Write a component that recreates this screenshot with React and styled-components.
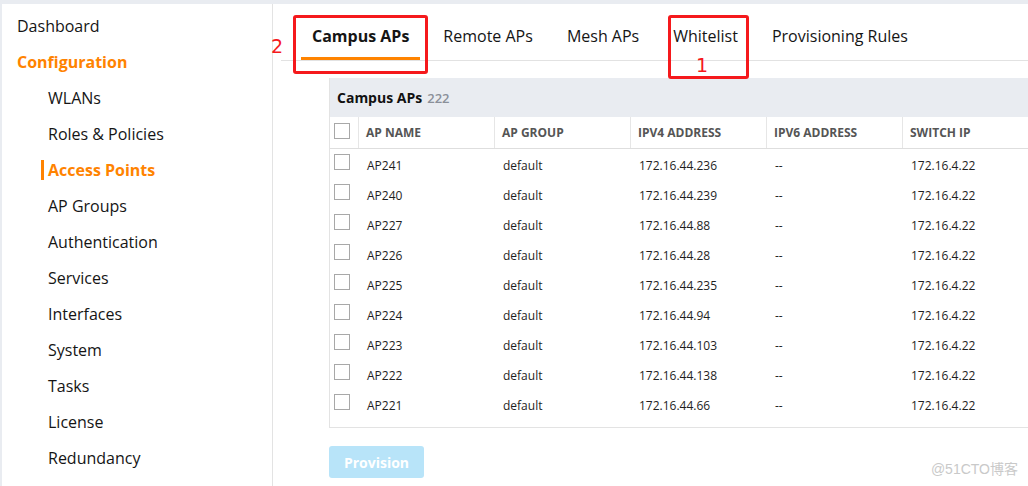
import styled, { createGlobalStyle } from "styled-components";

const GlobalStyle = createGlobalStyle`
  html, body {
    margin: 0;
    padding: 0;
    background: #fff;
    overflow: hidden;
  }
  body {
    font-family: "Open Sans", "Noto Sans", sans-serif;
    color: #1b1b1b;
  }
`;

const orange = "#ff8300";

const Page = styled.div`
  position: relative;
  width: 1028px;
  height: 486px;
  border-top: 4px solid #e9ecf1;
  box-sizing: border-box;
  display: flex;
  overflow: hidden;
`;

const Sidebar = styled.nav`
  width: 273px;
  flex: none;
  box-sizing: border-box;
  border-left: 2px solid #e9ecf1;
  border-right: 1px solid #e3e3e3;
  padding: 4px 0 0 15px;
`;

const NavItem = styled.div`
  position: relative;
  height: 36px;
  line-height: 36px;
  font-size: 16px;
  padding-left: ${(p) => (p.$sub ? "31px" : "0")};
  color: ${(p) => (p.$active ? orange : "#151515")};
  font-weight: ${(p) => (p.$active ? 700 : 400)};
  white-space: nowrap;

  ${(p) =>
    p.$marker &&
    `
    &::before {
      content: "";
      position: absolute;
      left: 24px;
      top: 8px;
      width: 3px;
      height: 20px;
      background: ${orange};
    }
  `}
`;

const Main = styled.main`
  flex: 1;
  padding-left: 8px;
  min-width: 0;
`;

const TabBar = styled.div`
  display: flex;
  gap: 12px;
  height: 56px;
  padding-left: 20px;
  border-bottom: 1px solid #e2e2e2;
`;

const Tab = styled.div`
  display: flex;
  align-items: center;
  padding: 11px 11px 0;
  font-size: 16px;
  font-weight: ${(p) => (p.$active ? 700 : 400)};
  color: #151515;
  border-bottom: 3px solid ${(p) => (p.$active ? orange : "transparent")};
  white-space: nowrap;
`;

const Content = styled.section`
  padding: 17px 0 0 48px;
`;

const Panel = styled.div`
  width: 720px;
  border-left: 1px solid #e3e3e3;
  border-bottom: 1px solid #e3e3e3;
  padding-bottom: 7px;
`;

const PanelHead = styled.div`
  height: 39px;
  display: flex;
  align-items: center;
  gap: 5px;
  padding-left: 7px;
  background: #e9ecf1;
  font-size: 14px;
  font-weight: 700;
  color: #111;
`;

const Count = styled.span`
  font-size: 13px;
  font-weight: 600;
  color: #8b9099;
`;

const Row = styled.div`
  display: grid;
  grid-template-columns: 28px repeat(5, 136px);
  height: ${(p) => (p.$head ? "31px" : "30px")};
  align-items: center;
  ${(p) => p.$head && "border-bottom: 1px solid #dedede; margin-bottom: 1px;"}
`;

const HeadCell = styled.div`
  height: 100%;
  display: flex;
  align-items: center;
  padding-left: ${(p) => (p.$first ? "0" : "7px")};
  font-size: 12px;
  font-weight: 700;
  color: #555;
  border-left: ${(p) => (p.$first ? "none" : "1px solid #e6e6e6")};
  box-sizing: border-box;
`;

const Cell = styled.div`
  padding-left: 9px;
  font-size: 12px;
  color: #1e1e1e;
  white-space: nowrap;
`;

const Check = styled.span`
  display: block;
  width: 14px;
  height: 14px;
  margin: ${(p) => (p.$head ? "-4px 0 0 4px" : "-6px 0 0 4px")};
  border: 1px solid #a8a8a8;
  background: #fff;
`;

const ProvisionButton = styled.button`
  margin-top: 18px;
  width: 95px;
  height: 32px;
  border: none;
  border-radius: 3px;
  background: #b8e4f9;
  color: #fff;
  font-family: "Open Sans", sans-serif;
  font-size: 14px;
  font-weight: 700;
`;

const Annotation = styled.div`
  position: absolute;
  left: ${(p) => p.$x}px;
  top: ${(p) => p.$y}px;
  width: ${(p) => p.$w}px;
  height: ${(p) => p.$h}px;
  border: 3px solid #f5191c;
  border-radius: 3px;
  box-sizing: border-box;
`;

const Mark = styled.span`
  position: absolute;
  left: ${(p) => p.$x}px;
  top: ${(p) => p.$y}px;
  font-family: "DejaVu Sans", sans-serif;
  font-size: 19px;
  line-height: 1;
  color: #f5191c;
`;

const Watermark = styled.span`
  position: absolute;
  right: 10px;
  bottom: 8px;
  font-family: "Liberation Sans", "Noto Sans CJK SC", sans-serif;
  font-size: 14px;
  color: #c9c9c9;
`;

const subItems = [
  "WLANs",
  "Roles & Policies",
  "Access Points",
  "AP Groups",
  "Authentication",
  "Services",
  "Interfaces",
  "System",
  "Tasks",
  "License",
  "Redundancy",
];

const tabs = ["Campus APs", "Remote APs", "Mesh APs", "Whitelist", "Provisioning Rules"];

const columns = ["AP NAME", "AP GROUP", "IPV4 ADDRESS", "IPV6 ADDRESS", "SWITCH IP"];

const aps = [
  ["AP241", "172.16.44.236"],
  ["AP240", "172.16.44.239"],
  ["AP227", "172.16.44.88"],
  ["AP226", "172.16.44.28"],
  ["AP225", "172.16.44.235"],
  ["AP224", "172.16.44.94"],
  ["AP223", "172.16.44.103"],
  ["AP222", "172.16.44.138"],
  ["AP221", "172.16.44.66"],
];

export default function App() {
  return (
    <>
      <GlobalStyle />
      <Page>
        <Sidebar>
          <NavItem>Dashboard</NavItem>
          <NavItem $active>Configuration</NavItem>
          {subItems.map((item) => (
            <NavItem
              key={item}
              $sub
              $active={item === "Access Points"}
              $marker={item === "Access Points"}
            >
              {item}
            </NavItem>
          ))}
        </Sidebar>

        <Main>
          <TabBar>
            {tabs.map((t, i) => (
              <Tab key={t} $active={i === 0}>
                {t}
              </Tab>
            ))}
          </TabBar>

          <Content>
            <Panel>
              <PanelHead>
                Campus APs <Count>222</Count>
              </PanelHead>
              <Row $head>
                <HeadCell $first>
                  <Check $head />
                </HeadCell>
                {columns.map((c) => (
                  <HeadCell key={c}>{c}</HeadCell>
                ))}
              </Row>
              {aps.map(([name, ip]) => (
                <Row key={name}>
                  <div>
                    <Check />
                  </div>
                  <Cell>{name}</Cell>
                  <Cell>default</Cell>
                  <Cell>{ip}</Cell>
                  <Cell>--</Cell>
                  <Cell>172.16.4.22</Cell>
                </Row>
              ))}
            </Panel>
            <ProvisionButton disabled>Provision</ProvisionButton>
          </Content>
        </Main>

        {/* red annotation marks drawn over the screenshot */}
        <Annotation $x={293} $y={11} $w={135} $h={59} />
        <Mark $x={271} $y={33}>2</Mark>
        <Annotation $x={668} $y={11} $w={81} $h={64} />
        <Mark $x={696} $y={52}>1</Mark>

        <Watermark>@51CTO博客</Watermark>
      </Page>
    </>
  );
}
